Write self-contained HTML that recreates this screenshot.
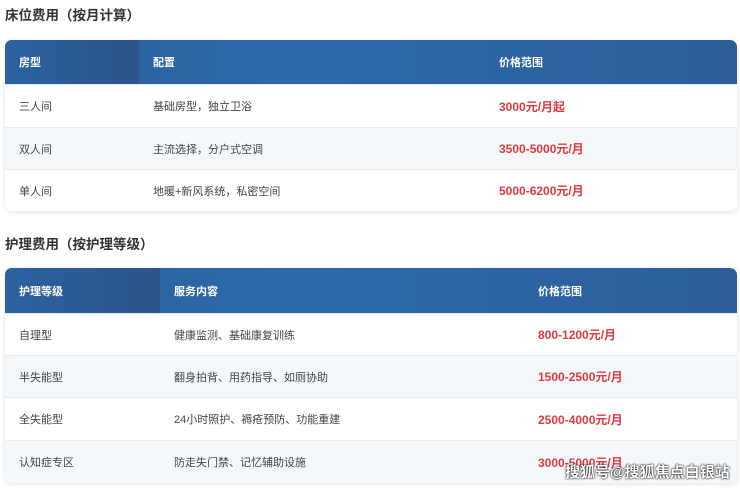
<!DOCTYPE html>
<html><head><meta charset="utf-8"><style>
body{margin:0;width:740px;height:488px;background:#fff;font-family:"Liberation Sans","Noto Sans CJK SC",sans-serif;position:relative;overflow:hidden}
h2{position:absolute;left:5px;margin:0;font-size:13.5px;font-weight:bold;color:#333}
.t{position:absolute;left:5px;width:732px;border-radius:7px;overflow:hidden;box-shadow:0 1px 5px rgba(0,0,0,.12);background:#fff}
.r{display:flex;align-items:center;font-size:11px;color:#444;border-top:1px solid #e6ecf2;box-sizing:border-box}
.t .h{background:linear-gradient(90deg,#2c5f9a,#2c6aab 40%,#2c5e98);color:#fff;font-weight:bold;border:none}
.h div:first-child{background:linear-gradient(90deg,#2b62a0,#2c548a);align-self:stretch;display:flex;align-items:center}
.r div{padding-left:14px;box-sizing:border-box}
.p{color:#e03a3e;font-weight:bold;font-size:12px}
.wm{position:absolute;left:565px;top:461px;font-size:15px;font-weight:bold;color:#fff;text-shadow:0 0 2px #000,0 0 1px #000}
</style></head><body>
<h2 style="top:4px">床位费用（按月计算）</h2>
<div class="t" style="top:40px">
<div class="r h" style="height:44px"><div style="width:134px">房型</div><div style="width:346px">配置</div><div>价格范围</div></div>
<div class="r" style="height:43px;background:#fff"><div style="width:134px">三人间</div><div style="width:346px">基础房型，独立卫浴</div><div class="p">3000元/月起</div></div>
<div class="r" style="height:42px;background:#f5f8fb"><div style="width:134px">双人间</div><div style="width:346px">主流选择，分户式空调</div><div class="p">3500-5000元/月</div></div>
<div class="r" style="height:42px;background:#fff"><div style="width:134px">单人间</div><div style="width:346px">地暖+新风系统，私密空间</div><div class="p">5000-6200元/月</div></div>
</div>
<h2 style="top:233px">护理费用（按护理等级）</h2>
<div class="t" style="top:268px">
<div class="r h" style="height:45px"><div style="width:155px">护理等级</div><div style="width:364px">服务内容</div><div>价格范围</div></div>
<div class="r" style="height:42px;background:#fff"><div style="width:155px">自理型</div><div style="width:364px">健康监测、基础康复训练</div><div class="p">800-1200元/月</div></div>
<div class="r" style="height:42px;background:#f5f8fb"><div style="width:155px">半失能型</div><div style="width:364px">翻身拍背、用药指导、如厕协助</div><div class="p">1500-2500元/月</div></div>
<div class="r" style="height:43px;background:#fff"><div style="width:155px">全失能型</div><div style="width:364px">24小时照护、褥疮预防、功能重建</div><div class="p">2500-4000元/月</div></div>
<div class="r" style="height:43px;background:#f5f8fb"><div style="width:155px">认知症专区</div><div style="width:364px">防走失门禁、记忆辅助设施</div><div class="p">3000-5000元/月</div></div>
</div>
<div class="wm">搜狐号@搜狐焦点白银站</div>
</body></html>
